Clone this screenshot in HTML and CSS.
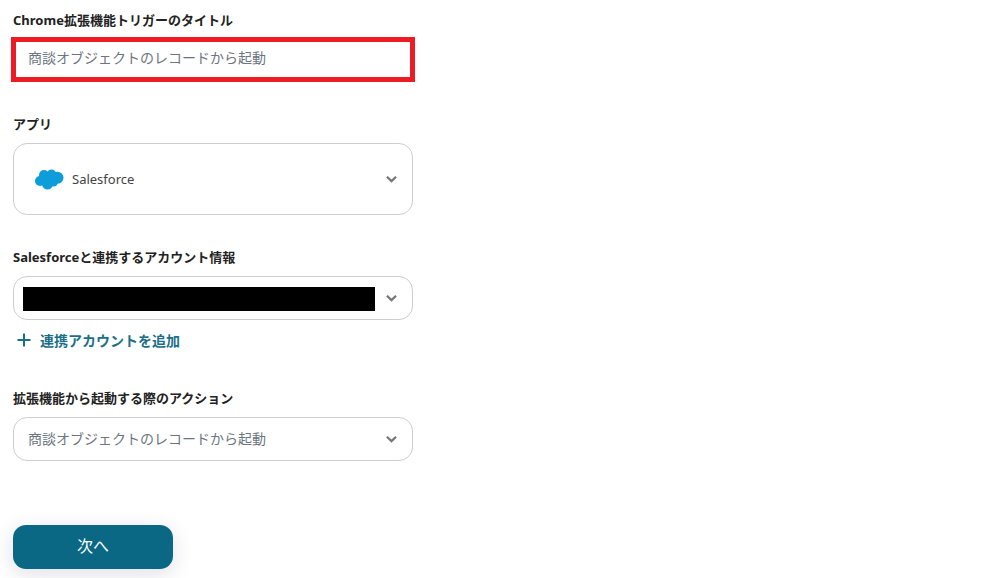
FILE: index.html
```html
<!DOCTYPE html>
<html lang="ja">
<head>
<meta charset="utf-8">
<title>Chrome拡張機能トリガー</title>
<link rel="stylesheet" href="styles.css">
</head>
<body>
<main class="form">
  <section class="field field-title">
    <div class="label">Chrome拡張機能トリガーのタイトル</div>
    <div class="title-input">商談オブジェクトのレコードから起動</div>
  </section>
  <section class="field field-app">
    <div class="label">アプリ</div>
    <div class="select select-tall">
      <svg class="sf-logo" width="29" height="21" viewBox="0 0 29 21" aria-hidden="true">
        <g fill="#0d9dda">
          <circle cx="9" cy="6" r="5"/>
          <circle cx="16.500" cy="5.500" r="5"/>
          <circle cx="22.500" cy="8.800" r="6"/>
          <circle cx="5" cy="12" r="5"/>
          <circle cx="12.500" cy="15" r="5.500"/>
          <circle cx="18.500" cy="13" r="4.500"/>
          <rect x="6" y="6" width="14" height="9"/>
        </g>
      </svg>
      <span class="app-name">Salesforce</span>
      <svg class="chevron" width="11" height="8" viewBox="0 0 12 8" aria-hidden="true"><path d="M1 1.500 6 6.300 11 1.500" fill="none" stroke="#777" stroke-width="2.400"/></svg>
    </div>
  </section>
  <section class="field field-account">
    <div class="label">Salesforceと連携するアカウント情報</div>
    <div class="select select-redacted">
      <div class="redacted"></div>
      <svg class="chevron" width="11" height="8" viewBox="0 0 12 8" aria-hidden="true"><path d="M1 1.500 6 6.300 11 1.500" fill="none" stroke="#777" stroke-width="2.400"/></svg>
    </div>
    <div class="add-link">
      <svg width="14" height="14" viewBox="0 0 14 14" aria-hidden="true"><path d="M7 .5v13M.5 7h13" fill="none" stroke="#1b6f88" stroke-width="2"/></svg>
      <span>連携アカウントを追加</span>
    </div>
  </section>
  <section class="field field-action">
    <div class="label">拡張機能から起動する際のアクション</div>
    <div class="select select-text">
      <span class="value">商談オブジェクトのレコードから起動</span>
      <svg class="chevron" width="11" height="8" viewBox="0 0 12 8" aria-hidden="true"><path d="M1 1.500 6 6.300 11 1.500" fill="none" stroke="#777" stroke-width="2.400"/></svg>
    </div>
  </section>
  <button class="next" type="button">次へ</button>
</main>
</body>
</html>
```
FILE: styles.css
```css
* { box-sizing: border-box; }
html, body { margin: 0; height: 100%; background: #fff; overflow: hidden; }
body {
  font-family: "Noto Sans", "Noto Sans CJK JP", sans-serif;
  color: #2d2d2d;
}
.form {
  width: 400px;
  margin-left: 13px;
  display: flex;
  flex-direction: column;
}
.label {
  font-size: 13px;
  font-weight: 700;
  line-height: 20px;
  color: #222;
}
.field-title { padding-top: 10px; }
.title-input {
  width: 404px;
  height: 45px;
  margin: 7px 0 0 -2px;
  border: 5px solid #ed1c24;
  padding: 0 0 5px 12px;
  display: flex;
  align-items: center;
  font-size: 14px;
  color: #6c7580;
}
.field-app { margin-top: 32px; }
.select {
  width: 400px;
  background: #fff;
  border: 1px solid #cdcdd2;
  border-radius: 14px;
  display: flex;
  align-items: center;
  position: relative;
}
.select-tall { height: 72px; margin-top: 9px; padding-left: 21px; }
.sf-logo { flex: none; }
.app-name { margin-left: 8px; font-size: 13px; color: #444; }
.chevron { position: absolute; right: 15px; top: 50%; margin-top: -4px; }
.field-account { margin-top: 32px; }
.select-redacted { height: 44px; margin-top: 9px; padding: 2px 0 0 9px; }
.redacted { width: 352px; height: 24px; background: #000; }
.add-link {
  margin-top: 10px;
  padding-left: 4px;
  height: 20px;
  display: flex;
  align-items: center;
  gap: 9px;
  font-size: 14px;
  font-weight: 700;
  color: #1b6f88;
}
.field-action { margin-top: 38px; }
.select-text { height: 44px; margin-top: 9px; padding: 0 0 2px 14px; }
.value { font-size: 14px; color: #6c7580; }
.next {
  width: 160px;
  height: 44px;
  margin-top: 64px;
  padding: 0 0 4px;
  border: 0;
  border-radius: 13px;
  background: #0b6884;
  color: #fff;
  font-family: inherit;
  font-size: 16px;
  box-shadow: 0 5px 20px rgba(60, 60, 110, .16);
}
```
